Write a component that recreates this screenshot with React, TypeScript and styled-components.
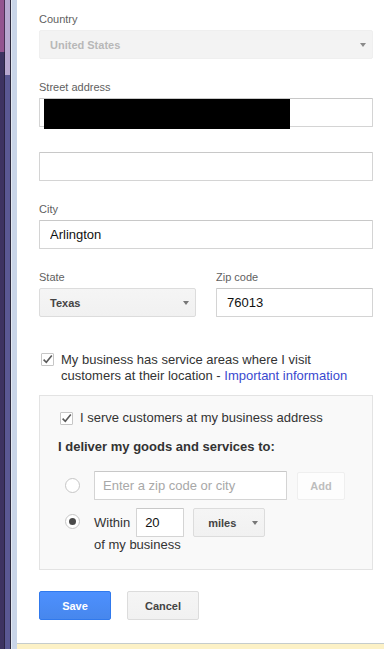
import React from "react";
import styled, { createGlobalStyle } from "styled-components";

const GlobalStyle = createGlobalStyle`
  html, body {
    margin: 0;
    padding: 0;
    background: #fff;
  }
  body {
    font-family: "Liberation Sans", Arial, sans-serif;
    color: #333;
  }
  * {
    box-sizing: border-box;
  }
`;

type StripeProps = {
  $w: number;
  $top: string;
  $bottom?: string;
  $split?: number;
};

const App = () => {
  const [serviceAreas, setServiceAreas] = React.useState(true);
  const [atAddress, setAtAddress] = React.useState(true);
  const [mode, setMode] = React.useState<"place" | "radius">("radius");
  const [radius, setRadius] = React.useState("20");

  return (
    <>
      <GlobalStyle />
      <Page>
        <WindowEdge>
          <Stripe $w={4} $top="#93538f" $bottom="#3d3361" $split={52} />
          <Stripe $w={1} $top="#4a2f55" $bottom="#2a2442" $split={52} />
          <Stripe $w={5} $top="#b8a8d0" $bottom="#5a5893" $split={75} />
          <Stripe $w={1} $top="#2c2a3e" />
          <Stripe $w={1} $top="#e3e9f3" />
          <Stripe $w={5} $top="#c9d5e8" />
        </WindowEdge>
        <Main>
          <Form>
            <Fields>
              <Field>
                <Label>Country</Label>
                <Dropdown $disabled>
                  United States
                  <Caret $disabled />
                </Dropdown>
              </Field>
              <Field>
                <Label>Street address</Label>
                <Stack>
                  <Redacted>
                    <TextInput defaultValue="" />
                    <BlackOut />
                  </Redacted>
                  <TextInput defaultValue="" />
                </Stack>
              </Field>
              <Field>
                <Label>City</Label>
                <TextInput defaultValue="Arlington" />
              </Field>
              <Pair>
                <Field>
                  <Label>State</Label>
                  <Dropdown>
                    Texas
                    <Caret />
                  </Dropdown>
                </Field>
                <Field>
                  <Label>Zip code</Label>
                  <TextInput defaultValue="76013" />
                </Field>
              </Pair>
            </Fields>

            <CheckRow $top onClick={() => setServiceAreas(!serviceAreas)}>
              <CheckBox checked={serviceAreas} />
              <CheckText>
                My business has service areas where I visit customers at their
                location - <Link href="#">Important information</Link>
              </CheckText>
            </CheckRow>

            <Panel>
              <CheckRow $inner onClick={() => setAtAddress(!atAddress)}>
                <CheckBox checked={atAddress} />
                <CheckText>I serve customers at my business address</CheckText>
              </CheckRow>
              <Heading>I deliver my goods and services to:</Heading>
              <RadioRow>
                <Radio
                  $checked={mode === "place"}
                  onClick={() => setMode("place")}
                />
                <PlaceInput placeholder="Enter a zip code or city" />
                <AddButton type="button">Add</AddButton>
              </RadioRow>
              <RadioRow $tight>
                <Radio
                  $checked={mode === "radius"}
                  $offset
                  onClick={() => setMode("radius")}
                />
                <RadiusBlock>
                  <RadiusLine>
                    <span>Within</span>
                    <SmallInput
                      value={radius}
                      onChange={(e) => setRadius(e.target.value)}
                    />
                    <Dropdown $small>
                      miles
                      <Caret />
                    </Dropdown>
                  </RadiusLine>
                  <span>of my business</span>
                </RadiusBlock>
              </RadioRow>
            </Panel>

            <Actions>
              <Button $primary type="button">
                Save
              </Button>
              <Button type="button">Cancel</Button>
            </Actions>
          </Form>
          <Footer />
        </Main>
      </Page>
    </>
  );
};

const CheckBox = ({ checked }: { checked: boolean }) => (
  <Box>
    {checked && (
      <svg width="13" height="13" viewBox="0 0 13 13">
        <path
          d="M2.6 6.6 L5.3 9.3 L10.8 2.4"
          fill="none"
          stroke="#5a5a5a"
          strokeWidth="1.6"
        />
      </svg>
    )}
  </Box>
);

export default App;

const Page = styled.div`
  display: flex;
  height: 100vh;
  min-height: 649px;
`;

const WindowEdge = styled.div`
  display: flex;
  flex-shrink: 0;
`;

const Stripe = styled.div<StripeProps>`
  width: ${({ $w }) => $w}px;
  background: ${({ $top, $bottom, $split }) =>
    $bottom
      ? `linear-gradient(to bottom, ${$top} ${$split}px, ${$bottom} ${$split}px)`
      : $top};
`;

const Main = styled.div`
  flex: 1;
  display: flex;
  flex-direction: column;
  min-width: 0;
`;

const Form = styled.div`
  flex: 1;
  display: flex;
  flex-direction: column;
  padding: 12px 11px 0 22px;
`;

const Fields = styled.div`
  display: flex;
  flex-direction: column;
  gap: 21px;
`;

const Field = styled.div`
  display: flex;
  flex-direction: column;
  gap: 4px;
`;

const Stack = styled.div`
  display: flex;
  flex-direction: column;
  gap: 25px;
`;

const Pair = styled.div`
  display: grid;
  grid-template-columns: 1fr 1fr;
  column-gap: 20px;
`;

const Label = styled.label`
  font-size: 11px;
  line-height: 14px;
  color: #5f5f5f;
`;

const TextInput = styled.input`
  width: 100%;
  height: 29px;
  border: 1px solid #d4d4d4;
  border-top-color: #c8c8c8;
  border-radius: 1px;
  padding: 0 10px;
  font-family: inherit;
  font-size: 13px;
  color: #111;
  background: #fff;
  outline: none;
`;

const Redacted = styled.div`
  position: relative;
`;

const BlackOut = styled.div`
  position: absolute;
  left: 5px;
  top: 1px;
  width: 246px;
  height: 30px;
  background: #000;
`;

const Dropdown = styled.div<{ $disabled?: boolean; $small?: boolean }>`
  display: flex;
  align-items: center;
  justify-content: space-between;
  height: 29px;
  width: ${({ $small }) => ($small ? "72px" : "100%")};
  flex-shrink: 0;
  padding: ${({ $small }) => ($small ? "0 6px 0 14px" : "0 6px 0 10px")};
  border: 1px solid ${({ $disabled }) => ($disabled ? "#efefef" : "#dcdcdc")};
  border-radius: 2px;
  background: ${({ $disabled }) =>
    $disabled ? "#f3f3f3" : "linear-gradient(#f5f5f5, #f1f1f1)"};
  color: ${({ $disabled }) => ($disabled ? "#b8b8b8" : "#444")};
  font-size: 11px;
  font-weight: bold;
  cursor: default;
`;

const Caret = styled.span<{ $disabled?: boolean }>`
  width: 0;
  height: 0;
  border-left: 3.5px solid transparent;
  border-right: 3.5px solid transparent;
  border-top: 4px solid ${({ $disabled }) => ($disabled ? "#8a8a8a" : "#777")};
`;

const CheckRow = styled.div<{ $top?: boolean; $inner?: boolean }>`
  display: flex;
  align-items: ${({ $top }) => ($top ? "flex-start" : "center")};
  gap: 7px;
  margin-top: ${({ $top }) => ($top ? "35px" : "0")};
  margin-left: ${({ $inner }) => ($inner ? "2px" : "2px")};
  cursor: default;

  & > span:first-child {
    margin-top: ${({ $top }) => ($top ? "1px" : "0")};
  }
`;

const Box = styled.span`
  flex-shrink: 0;
  display: block;
  width: 13px;
  height: 13px;
  border: 1px solid #c6c6c6;
  border-radius: 1px;
  background: #fff;
  position: relative;

  svg {
    position: absolute;
    left: -1px;
    top: -1px;
  }
`;

const CheckText = styled.span`
  font-size: 13px;
  line-height: 16px;
  color: #333;
`;

const Link = styled.a`
  color: #3949cf;
  text-decoration: none;
`;

const Panel = styled.div`
  margin-top: 11px;
  padding: 14px 18px 16px 18px;
  background: #f9f9f9;
  border: 1px solid #e3e3e3;
  display: flex;
  flex-direction: column;
`;

const Heading = styled.div`
  margin-top: 13px;
  font-size: 13px;
  line-height: 16px;
  font-weight: bold;
  color: #333;
`;

const RadioRow = styled.div<{ $tight?: boolean }>`
  display: flex;
  align-items: ${({ $tight }) => ($tight ? "flex-start" : "center")};
  margin-top: ${({ $tight }) => ($tight ? "8px" : "16px")};
  padding-left: 7px;
`;

const Radio = styled.span<{ $checked?: boolean; $offset?: boolean }>`
  flex-shrink: 0;
  width: 15px;
  height: 15px;
  margin-top: ${({ $offset }) => ($offset ? "6px" : "0")};
  margin-right: 14px;
  border: 1px solid #c6c6c6;
  border-radius: 50%;
  background: #fff;
  display: flex;
  align-items: center;
  justify-content: center;

  &::after {
    content: "";
    width: 7px;
    height: 7px;
    border-radius: 50%;
    background: #4a4a4a;
    display: ${({ $checked }) => ($checked ? "block" : "none")};
  }
`;

const PlaceInput = styled(TextInput)`
  width: 193px;
  padding: 0 8px;

  &::placeholder {
    color: #a8a8a8;
  }
`;

const AddButton = styled.button`
  margin-left: 10px;
  width: 48px;
  height: 28px;
  border: 1px solid #efefef;
  border-radius: 2px;
  background: #fdfdfd;
  color: #bdbdbd;
  font-family: inherit;
  font-size: 11px;
  font-weight: bold;
`;

const RadiusBlock = styled.div`
  display: flex;
  flex-direction: column;
  font-size: 13px;
  line-height: 16px;
  color: #333;
`;

const RadiusLine = styled.div`
  display: flex;
  align-items: center;
  gap: 6px;

  & > div {
    margin-left: 3px;
  }
`;

const SmallInput = styled(TextInput)`
  width: 48px;
  padding: 0 8px;
`;

const Actions = styled.div`
  display: flex;
  gap: 16px;
  margin-top: 21px;
`;

const Button = styled.button<{ $primary?: boolean }>`
  width: 72px;
  height: 29px;
  border-radius: 2px;
  font-family: inherit;
  font-size: 11px;
  font-weight: bold;
  border: 1px solid ${({ $primary }) => ($primary ? "#3079ed" : "#dcdcdc")};
  background: ${({ $primary }) =>
    $primary
      ? "linear-gradient(#4d90fe, #4787ed)"
      : "linear-gradient(#f5f5f5, #f1f1f1)"};
  color: ${({ $primary }) => ($primary ? "#fff" : "#444")};
`;

const Footer = styled.div`
  height: 6px;
  border-top: 1px solid #c5cccc;
  background: #fcf1c6;
  flex-shrink: 0;
`;
